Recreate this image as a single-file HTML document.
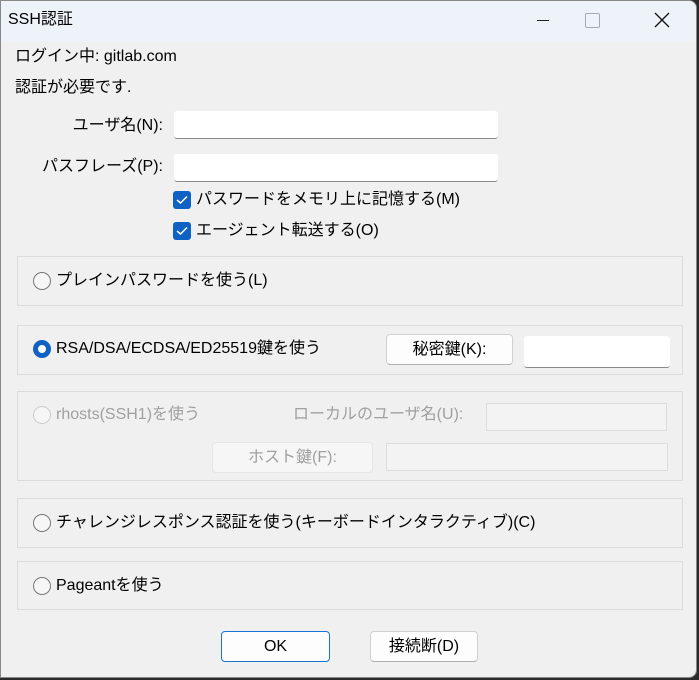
<!DOCTYPE html>
<html><head><meta charset="utf-8"><style>
*{margin:0;padding:0;box-sizing:border-box}
body{width:699px;height:680px;background:#2b2b2b;font-family:"Liberation Sans","Noto Sans CJK JP",sans-serif;font-size:16px;color:#000;overflow:hidden;position:relative}
.win{position:absolute;left:0;top:0;width:697px;height:678px;background:#f0f0f0;border-radius:0 8px 8px 0;overflow:hidden;border:1px solid #888}
.title{position:absolute;left:0;top:0;width:100%;height:40px;background:#eef2f9}
.a{position:absolute;white-space:nowrap;line-height:18px}
.in{position:absolute;background:#fff;border-bottom:1px solid #8a8a8a;border-radius:3px}
.grp{position:absolute;border:1px solid #dcdcdc;left:16px;width:666px}
.cb{position:absolute;width:18px;height:18px;background:#0f62c4;border-radius:3px}
.cb svg{position:absolute;left:3px;top:4px}
.rb{position:absolute;width:18px;height:18px;border:1.5px solid #777;border-radius:50%;background:#f6f6f6}
.btn{position:absolute;background:#fdfdfd;border:1px solid #d0d0d0;border-bottom-color:#b0b0b0;border-radius:4px;text-align:center;line-height:30px}
.dis{color:#a0a0a0}
.r{text-align:right}
</style></head><body>
<div class="win">
<div class="title"></div>
<div class="a" style="left:7px;top:10px;font-size:16px">SSH認証</div>
<div class="a" style="top:19px;left:536px;width:12px;height:1px;border-top:1px solid #222"></div>
<div class="a" style="left:584px;top:12px;width:15px;height:15px;border:1px solid #aaa;border-radius:2px"></div>
<svg class="a" style="left:653px;top:11px" width="16" height="16"><path d="M1 1L15 15M15 1L1 15" stroke="#111" stroke-width="1.3"/></svg>

<div class="a" style="left:14px;top:47px">ログイン中: gitlab.com</div>
<div class="a" style="left:14px;top:78px">認証が必要です.</div>
<div class="a r" style="left:0;width:162px;top:116px">ユーザ名(N):</div>
<div class="in" style="left:173px;top:110px;width:324px;height:28px"></div>
<div class="a r" style="left:0;width:162px;top:157px">パスフレーズ(P):</div>
<div class="in" style="left:173px;top:153px;width:324px;height:28px"></div>
<div class="cb" style="left:172px;top:190px"><svg width="12" height="10"><path d="M1 5L4.5 8L11 1.5" stroke="#fff" stroke-width="1.5" fill="none"/></svg></div>
<div class="a" style="left:195px;top:190px">パスワードをメモリ上に記憶する(M)</div>
<div class="cb" style="left:172px;top:221px"><svg width="12" height="10"><path d="M1 5L4.5 8L11 1.5" stroke="#fff" stroke-width="1.5" fill="none"/></svg></div>
<div class="a" style="left:195px;top:221px">エージェント転送する(O)</div>

<div class="grp" style="top:255px;height:50px"></div>
<div class="rb" style="left:32px;top:271px"></div>
<div class="a" style="left:55px;top:271px">プレインパスワードを使う(L)</div>

<div class="grp" style="top:324px;height:50px"></div>
<div class="rb" style="left:32px;top:339px;border:5px solid #0f62c4;background:#fff"></div>
<div class="a" style="left:55px;top:339px">RSA/DSA/ECDSA/ED25519鍵を使う</div>
<div class="btn" style="left:385px;top:333px;width:127px;height:31px">秘密鍵(K):</div>
<div class="in" style="left:523px;top:335px;width:146px;height:32px"></div>

<div class="grp" style="top:390px;height:90px"></div>
<div class="rb" style="left:32px;top:405px;border-color:#ccc"></div>
<div class="a dis" style="left:55px;top:405px">rhosts(SSH1)を使う</div>
<div class="a dis" style="left:292px;top:405px">ローカルのユーザ名(U):</div>
<div class="a" style="left:485px;top:402px;width:181px;height:28px;border:1px solid #ddd;background:#f3f3f3"></div>
<div class="btn dis" style="left:211px;top:441px;width:161px;height:31px;background:#f6f6f6;border-color:#e6e6e6">ホスト鍵(F):</div>
<div class="a" style="left:385px;top:442px;width:282px;height:28px;border:1px solid #ddd;background:#f3f3f3"></div>

<div class="grp" style="top:497px;height:50px"></div>
<div class="rb" style="left:32px;top:513px"></div>
<div class="a" style="left:55px;top:513px">チャレンジレスポンス認証を使う(キーボードインタラクティブ)(C)</div>

<div class="grp" style="top:560px;height:49px"></div>
<div class="rb" style="left:32px;top:576px"></div>
<div class="a" style="left:55px;top:576px">Pageantを使う</div>

<div class="btn" style="left:220px;top:630px;width:109px;height:31px;border:1.5px solid #1a73d9">OK</div>
<div class="btn" style="left:369px;top:630px;width:108px;height:31px">接続断(D)</div>
</div>
</body></html>
